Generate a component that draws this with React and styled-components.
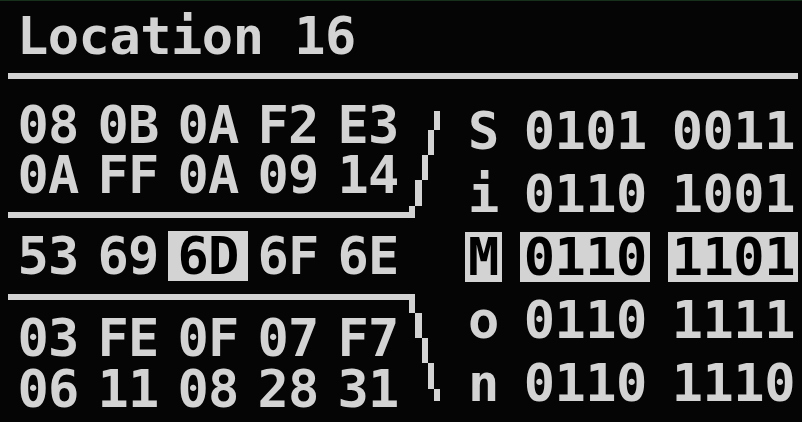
import React from "react";
import styled, { createGlobalStyle } from "styled-components";

const INK = "#d3d3d3";
const BG = "#050505";

const upperRows = [
  ["08", "0B", "0A", "F2", "E3"],
  ["0A", "FF", "0A", "09", "14"],
];
const middleRow = ["53", "69", "6D", "6F", "6E"];
const lowerRows = [
  ["03", "FE", "0F", "07", "F7"],
  ["06", "11", "08", "28", "31"],
];
const bitRows = [
  ["S", "0101", "0011"],
  ["i", "0110", "1001"],
  ["M", "0110", "1101"],
  ["o", "0110", "1111"],
  ["n", "0110", "1110"],
];
const cursor = 2;

// stair steps of the two brackets, in px from the bracket's top left
const upSteps = [
  [0, 106, 6, 12],
  [6, 80, 7, 26],
  [13, 55, 6, 25],
  [19, 30, 6, 25],
  [25, 11, 6, 19],
];
const downSteps = [
  [0, 0, 6, 19],
  [6, 19, 7, 25],
  [13, 44, 6, 25],
  [19, 69, 6, 26],
  [25, 95, 6, 12],
];

const GlobalStyle = createGlobalStyle`
  html, body {
    margin: 0;
    padding: 0;
    background: ${BG};
  }
`;

const Screen = styled.div`
  width: 802px;
  height: 422px;
  box-sizing: border-box;
  border-top: 1px solid #17301c;
  padding-top: 9px;
  background: ${BG};
  color: ${INK};
  font-family: "DejaVu Sans Mono", "Liberation Mono", monospace;
  font-weight: bold;
  font-size: 52px;
  overflow: hidden;
`;

const Title = styled.h1`
  margin: 0;
  padding-left: 17px;
  font-size: 52px;
  line-height: 52px;
  height: 52px;
  font-weight: bold;
  letter-spacing: -0.5px;
  white-space: pre;
`;

const Rule = styled.div`
  height: 6px;
  margin: 11px 4px 0 8px;
  background: ${INK};
`;

const Body = styled.div`
  display: grid;
  grid-template-columns: 432px 1fr;
  column-gap: 25px;
  padding-left: 8px;
`;

const HexColumn = styled.div`
  display: flex;
  flex-direction: column;
  padding-top: 21px;
  gap: 13px;
`;

const HexGroup = styled.div`
  display: flex;
  align-items: flex-start;
`;

const HexBlock = styled.div`
  width: 401px;
  display: flex;
  flex-direction: column;
  gap: ${(p) => p.$gap || 0}px;
  ${(p) =>
    p.$edge === "bottom"
      ? `border-bottom: 6px solid ${INK}; padding-bottom: 12px;`
      : `border-top: 6px solid ${INK}; padding-top: 13px;`}
`;

const HexRow = styled.div`
  display: flex;
`;

const Byte = styled.span`
  height: 50px;
  line-height: 50px;
  padding: 0 9.5px;
  letter-spacing: -0.8px;
  background: ${(p) => (p.$active ? INK : "transparent")};
  color: ${(p) => (p.$active ? "#000" : INK)};
`;

const BracketSvg = styled.svg`
  flex: none;
  display: block;
`;

const BitColumn = styled.div`
  display: flex;
  flex-direction: column;
  gap: 13px;
  padding-top: 27px;
`;

const BitRow = styled.div`
  display: flex;
  gap: 18px;
`;

const Glyph = styled.span`
  height: 50px;
  line-height: 50px;
  padding: 0 3px;
  background: ${(p) => (p.$active ? INK : "transparent")};
  color: ${(p) => (p.$active ? "#000" : INK)};
`;

const Nibble = styled.span`
  height: 50px;
  line-height: 50px;
  padding: 0 3.4px;
  letter-spacing: -0.5px;
  background: ${(p) => (p.$active ? INK : "transparent")};
  color: ${(p) => (p.$active ? "#000" : INK)};
`;

function Bracket({ steps, height }) {
  return (
    <BracketSvg width={31} height={height} viewBox={`0 0 31 ${height}`} shapeRendering="crispEdges">
      {steps.map(([x, y, w, h], i) => (
        <rect key={i} x={x} y={y} width={w} height={h} fill={INK} />
      ))}
    </BracketSvg>
  );
}

function Bytes({ values, active }) {
  return (
    <HexRow>
      {values.map((v, i) => (
        <Byte key={i} $active={i === active}>
          {v}
        </Byte>
      ))}
    </HexRow>
  );
}

export default function App() {
  return (
    <>
      <GlobalStyle />
      <Screen>
        <Title>Location 16</Title>
        <Rule />
        <Body>
          <HexColumn>
            <HexGroup>
              <HexBlock $edge="bottom">
                {upperRows.map((r, i) => (
                  <Bytes key={i} values={r} />
                ))}
              </HexBlock>
              <Bracket steps={upSteps} height={118} />
            </HexGroup>

            <Bytes values={middleRow} active={cursor} />

            <HexGroup>
              <HexBlock $edge="top" $gap={1}>
                {lowerRows.map((r, i) => (
                  <Bytes key={i} values={r} />
                ))}
              </HexBlock>
              <Bracket steps={downSteps} height={120} />
            </HexGroup>
          </HexColumn>

          <BitColumn>
            {bitRows.map(([ch, hi, lo], i) => (
              <BitRow key={i}>
                <Glyph $active={i === cursor}>{ch}</Glyph>
                <Nibble $active={i === cursor}>{hi}</Nibble>
                <Nibble $active={i === cursor}>{lo}</Nibble>
              </BitRow>
            ))}
          </BitColumn>
        </Body>
      </Screen>
    </>
  );
}
